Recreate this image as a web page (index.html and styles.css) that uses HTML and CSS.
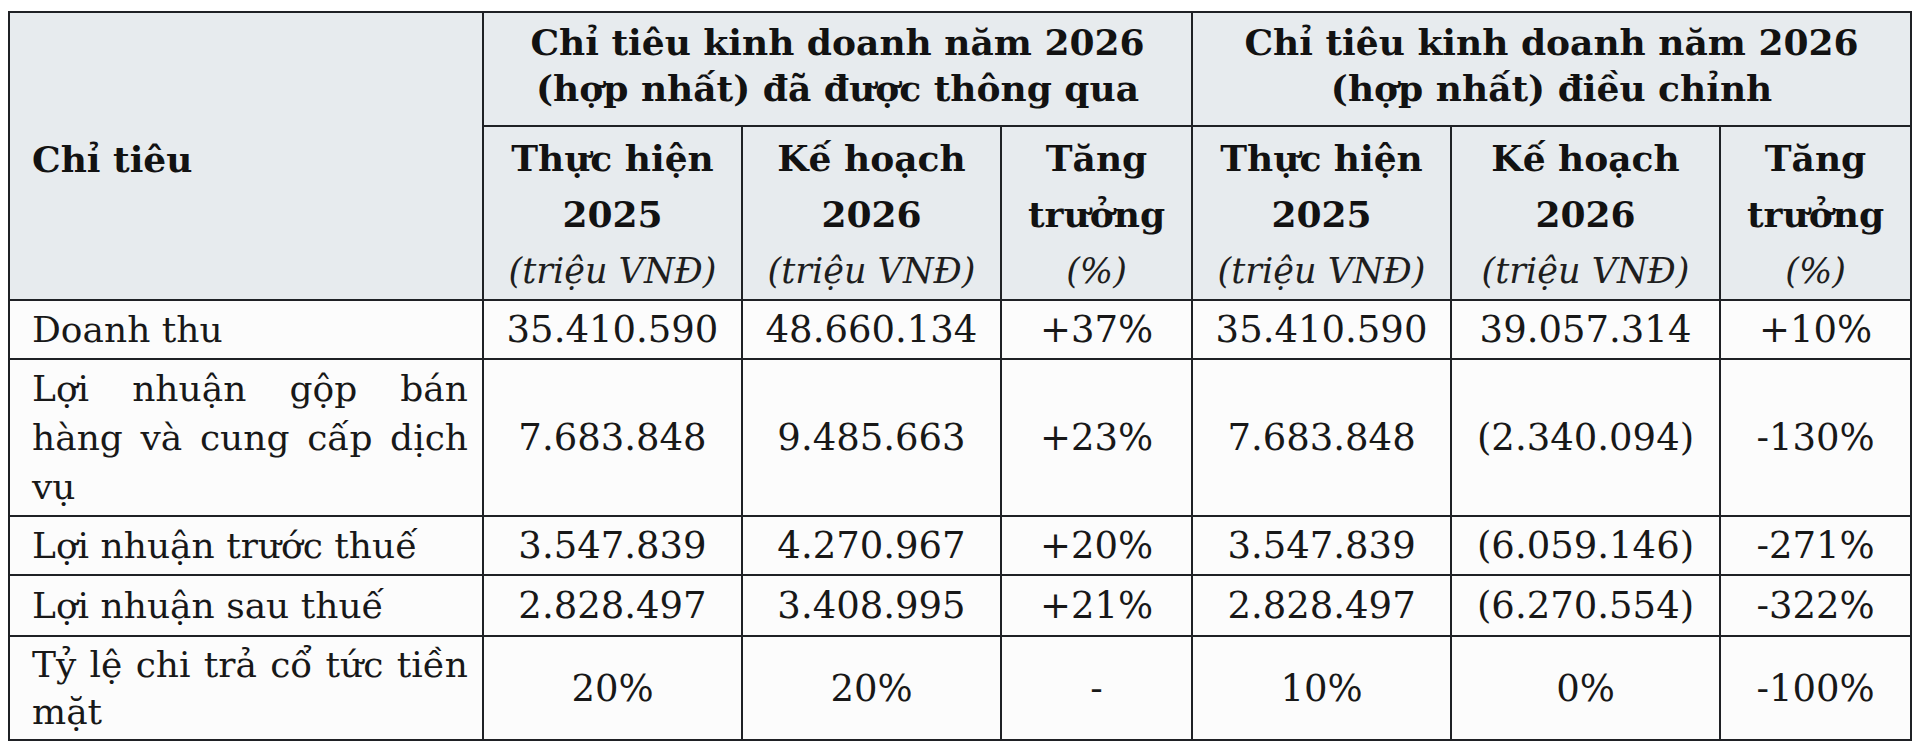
FILE: index.html
```html
<!DOCTYPE html>
<html lang="vi">
<head>
<meta charset="utf-8">
<title>Chỉ tiêu kinh doanh năm 2026</title>
<link rel="stylesheet" href="styles.css">
</head>
<body>
<div class="page">
<table class="kpi">
  <colgroup>
    <col class="c-name">
    <col class="c-num">
    <col class="c-num">
    <col class="c-pct">
    <col class="c-num">
    <col class="c-num2">
    <col class="c-pct">
  </colgroup>
  <thead>
    <tr class="grp">
      <th class="name-h" rowspan="2">Chỉ tiêu</th>
      <th colspan="3">Chỉ tiêu kinh doanh năm 2026<br>(hợp nhất) đã được thông qua</th>
      <th colspan="3">Chỉ tiêu kinh doanh năm 2026<br>(hợp nhất) điều chỉnh</th>
    </tr>
    <tr class="sub">
      <th>Thực hiện<br>2025<br><span class="unit">(triệu VNĐ)</span></th>
      <th>Kế hoạch<br>2026<br><span class="unit">(triệu VNĐ)</span></th>
      <th>Tăng<br>trưởng<br><span class="unit">(%)</span></th>
      <th>Thực hiện<br>2025<br><span class="unit">(triệu VNĐ)</span></th>
      <th>Kế hoạch<br>2026<br><span class="unit">(triệu VNĐ)</span></th>
      <th>Tăng<br>trưởng<br><span class="unit">(%)</span></th>
    </tr>
  </thead>
  <tbody>
    <tr>
      <td class="name">Doanh thu</td>
      <td>35.410.590</td><td>48.660.134</td><td>+37%</td>
      <td>35.410.590</td><td>39.057.314</td><td>+10%</td>
    </tr>
    <tr>
      <td class="name">Lợi nhuận gộp bán hàng và cung cấp dịch vụ</td>
      <td>7.683.848</td><td>9.485.663</td><td>+23%</td>
      <td>7.683.848</td><td>(2.340.094)</td><td>-130%</td>
    </tr>
    <tr>
      <td class="name">Lợi nhuận trước thuế</td>
      <td>3.547.839</td><td>4.270.967</td><td>+20%</td>
      <td>3.547.839</td><td>(6.059.146)</td><td>-271%</td>
    </tr>
    <tr class="after">
      <td class="name">Lợi nhuận sau thuế</td>
      <td>2.828.497</td><td>3.408.995</td><td>+21%</td>
      <td>2.828.497</td><td>(6.270.554)</td><td>-322%</td>
    </tr>
    <tr class="last">
      <td class="name">Tỷ lệ chi trả cổ tức tiền mặt</td>
      <td>20%</td><td>20%</td><td>-</td>
      <td>10%</td><td>0%</td><td>-100%</td>
    </tr>
  </tbody>
</table>
</div>
</body>
</html>
```

FILE: styles.css
```css
html, body {
  margin: 0;
  padding: 0;
  background: #ffffff;
}

.page {
  padding: 11px 0 0 8px;
}

.kpi {
  border-collapse: collapse;
  table-layout: fixed;
  width: 1900px;
  font-family: "DejaVu Serif", "Liberation Serif", serif;
  color: #181818;
  background: #fcfcfc;
}

.c-name { width: 474px; }
.c-num { width: 259px; }
.c-num2 { width: 269px; }
.c-pct { width: 191px; }

.kpi th,
.kpi td {
  border: 2px solid #1f2125;
}

.kpi th {
  background: #e7ebee;
  font-weight: bold;
  font-size: 36px;
  text-align: center;
  color: #121212;
}

.grp th {
  line-height: 46px;
  padding: 6px 4px 14px;
  vertical-align: top;
}

.grp th.name-h {
  text-align: left;
  vertical-align: middle;
  padding: 6px 16px 0 22px;
  line-height: 46px;
}

.sub th {
  line-height: 56px;
  padding: 3px 4px 0;
  vertical-align: top;
}

.unit {
  font-weight: normal;
  font-style: italic;
  font-size: 35px;
  color: #1e1e1e;
}

.kpi td {
  font-size: 37px;
  line-height: 49px;
  padding: 4px 4px 4px;
  text-align: center;
  vertical-align: middle;
}

.kpi td.name {
  text-align: justify;
  padding: 4px 14px 4px 22px;
  font-size: 36px;
}

.kpi tr.after td {
  padding-top: 5px;
  padding-bottom: 5px;
}

.kpi tr.last td {
  line-height: 47px;
  padding-top: 4px;
  padding-bottom: 4px;
}
```
